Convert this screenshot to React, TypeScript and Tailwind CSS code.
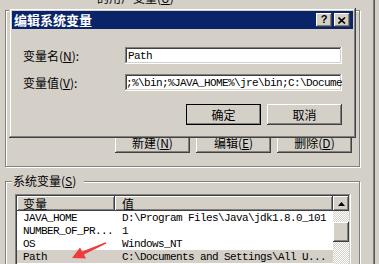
import React from "react";

const raised =
  "shadow-[inset_-1px_-1px_0_#404040,inset_1px_1px_0_#ffffff,inset_-2px_-2px_0_#808080,inset_2px_2px_0_#d4d0c8]";
const sunken =
  "shadow-[inset_-1px_-1px_0_#ffffff,inset_1px_1px_0_#808080,inset_-2px_-2px_0_#d4d0c8,inset_2px_2px_0_#404040]";
const etched = "border border-[#808080] shadow-[inset_1px_1px_0_#ffffff,1px_1px_0_#ffffff]";
const mono = "font-['Liberation_Mono',monospace] text-[11px] tracking-[-0.6px]";

const rows = [
  { name: "JAVA_HOME", value: "D:\\Program Files\\Java\\jdk1.8.0_101" },
  { name: "NUMBER_OF_PR...", value: "1" },
  { name: "OS", value: "Windows_NT" },
  { name: "Path", value: "C:\\Documents and Settings\\All U...", selected: true },
];

const Button = ({ children, isDefault }: { children: React.ReactNode; isDefault?: boolean }) => (
  <div
    className={`w-[75px] h-[21px] flex items-center justify-center bg-[#d4d0c8] ${raised} ${
      isDefault ? "outline outline-1 outline-black -outline-offset-1" : ""
    }`}
  >
    {children}
  </div>
);

const App = () => {
  return (
    <div className="relative w-[379px] h-[264px] overflow-hidden bg-[#d4d0c8] text-black text-[12px] leading-[14px] font-['Noto_Sans_CJK_SC',sans-serif]">
      {/* parent window */}
      <div className="flex h-full">
        <div className="w-[373px] shrink-0 pl-[5px]">
          <div className="h-[10px] overflow-hidden pl-[92px]">
            <div className="-mt-[9px] whitespace-nowrap">的用户变量(<u>U</u>)</div>
          </div>
          <div className={`w-[355px] h-[157px] ${etched} flex flex-col justify-end items-end pr-[7px] pb-[13px]`}>
            <div className="flex gap-[6px]">
              <Button>
                新建(<u>N</u>)
              </Button>
              <Button>
                编辑(<u>E</u>)
              </Button>
              <Button>
                删除(<u>D</u>)
              </Button>
            </div>
          </div>

          <div className={`mt-[14px] w-[355px] h-[100px] ${etched}`}>
            <div className="-mt-[8px] ml-[6px] w-fit pl-[1px] pr-[8px] h-[14px] bg-[#d4d0c8] whitespace-nowrap">
              系统变量(<u>S</u>)
            </div>
            <div className={`mt-[6px] ml-[9px] w-[336px] h-[80px] p-[2px] bg-white ${sunken}`}>
              <div className="flex h-full">
                <div className="w-[316px]">
                  <div className="flex h-[15px] bg-[#d4d0c8]">
                    <div className={`w-[98px] pl-[6px] flex items-center ${raised}`}>变量</div>
                    <div className={`flex-1 pl-[7px] flex items-center ${raised}`}>值</div>
                  </div>
                  {rows.map((r) => (
                    <div
                      key={r.name}
                      className={`flex h-[13px] items-center whitespace-nowrap ${mono} ${
                        r.selected ? "bg-[#d4d0c8]" : ""
                      }`}
                    >
                      <div className="w-[98px] pl-[6px]">{r.name}</div>
                      <div className="flex-1 pl-[7px] overflow-hidden">{r.value}</div>
                    </div>
                  ))}
                </div>
                <div className="w-[16px] flex flex-col">
                  <div className={`h-[15px] bg-[#d4d0c8] flex items-center justify-center ${raised}`}>
                    <svg width="7" height="4" viewBox="0 0 7 4">
                      <polygon points="3.5,0 7,4 0,4" fill="#000" />
                    </svg>
                  </div>
                  <div className="flex-1 pt-[11px] bg-[image:repeating-conic-gradient(#d4d0c8_0_25%,#ffffff_0_50%)] bg-size-[2px_2px]">
                    <div className={`h-[20px] bg-[#d4d0c8] ${raised}`} />
                  </div>
                </div>
              </div>
            </div>
          </div>
        </div>
        <div className="w-[1px] bg-[#808080]" />
        <div className="w-[1px] bg-[#5a5a5a]" />
      </div>

      {/* edit dialog */}
      <div
        className={`absolute left-[9px] top-[8px] w-[347px] h-[130px] p-[3px] bg-[#d4d0c8] shadow-[inset_-1px_-1px_0_#404040,inset_1px_1px_0_#d4d0c8,inset_-2px_-2px_0_#808080,inset_2px_2px_0_#ffffff]`}
      >
        <div className="h-[18px] bg-[#0a246a] flex items-center justify-between pl-[2px] pr-[3px]">
          <span className="text-white font-bold text-[13px] leading-[16px]">编辑系统变量</span>
          <div className="flex gap-[2px]">
            <div className={`w-[16px] h-[14px] bg-[#d4d0c8] flex items-center justify-center ${raised}`}>
              <span className="font-['Liberation_Sans',sans-serif] font-bold text-[11px] leading-[11px] -mt-[1px]">?</span>
            </div>
            <div className={`w-[16px] h-[14px] bg-[#d4d0c8] flex items-center justify-center ${raised}`}>
              <svg width="8" height="7" viewBox="0 0 8 7">
                <path d="M0.5 0.5 L7 6.5 M7 0.5 L0.5 6.5" stroke="#000" strokeWidth="1.6" />
              </svg>
            </div>
          </div>
        </div>

        <div className="pl-[11px] pr-[11px] pt-[18px]">
          <div className="flex items-center h-[17px]">
            <div className="w-[102px] whitespace-nowrap">
              变量名(<u>N</u>):
            </div>
            <div className={`flex-1 h-[17px] bg-white pl-[3px] flex items-center overflow-hidden ${sunken}`}>
              <span className={mono}>Path</span>
            </div>
          </div>
          <div className="flex items-center h-[17px] mt-[10px]">
            <div className="w-[102px] whitespace-nowrap">
              变量值(<u>V</u>):
            </div>
            <div className={`flex-1 h-[17px] bg-white pl-[1px] flex items-center overflow-hidden whitespace-nowrap ${sunken}`}>
              <span className={mono}>;%\bin;%JAVA_HOME%\jre\bin;C:\Docume</span>
            </div>
          </div>
          <div className="flex justify-end gap-[6px] mt-[13px]">
            <Button isDefault>确定</Button>
            <Button>取消</Button>
          </div>
        </div>
      </div>

      {/* annotation arrow */}
      <svg className="absolute left-0 top-0 pointer-events-none" width="379" height="264">
        <polygon
          points="72,258 86,258.5 84,254.6 106.4,243.6 105.6,242.2 82.2,251.6 80,247.5"
          fill="#ef3b3b"
        />
      </svg>
    </div>
  );
};

export default App;
